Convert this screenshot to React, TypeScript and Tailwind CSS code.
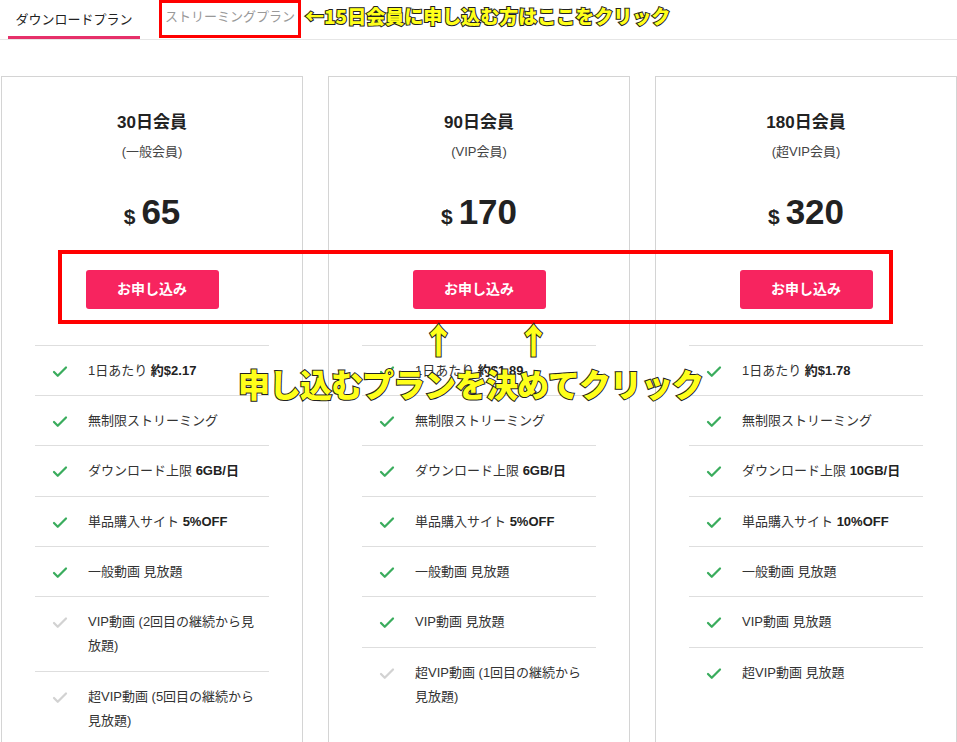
import { Check } from 'lucide-react';

type Feature = { text: string; bold?: string; on: boolean };
type Plan = { title: string; sub: string; price: string; features: Feature[] };

const plans: Plan[] = [
  {
    title: '30日会員',
    sub: '(一般会員)',
    price: '65',
    features: [
      { text: '1日あたり ', bold: '約$2.17', on: true },
      { text: '無制限ストリーミング', on: true },
      { text: 'ダウンロード上限 ', bold: '6GB/日', on: true },
      { text: '単品購入サイト ', bold: '5%OFF', on: true },
      { text: '一般動画 見放題', on: true },
      { text: 'VIP動画 (2回目の継続から見放題)', on: false },
      { text: '超VIP動画 (5回目の継続から見放題)', on: false },
    ],
  },
  {
    title: '90日会員',
    sub: '(VIP会員)',
    price: '170',
    features: [
      { text: '1日あたり ', bold: '約$1.89', on: true },
      { text: '無制限ストリーミング', on: true },
      { text: 'ダウンロード上限 ', bold: '6GB/日', on: true },
      { text: '単品購入サイト ', bold: '5%OFF', on: true },
      { text: '一般動画 見放題', on: true },
      { text: 'VIP動画 見放題', on: true },
      { text: '超VIP動画 (1回目の継続から見放題)', on: false },
    ],
  },
  {
    title: '180日会員',
    sub: '(超VIP会員)',
    price: '320',
    features: [
      { text: '1日あたり ', bold: '約$1.78', on: true },
      { text: '無制限ストリーミング', on: true },
      { text: 'ダウンロード上限 ', bold: '10GB/日', on: true },
      { text: '単品購入サイト ', bold: '10%OFF', on: true },
      { text: '一般動画 見放題', on: true },
      { text: 'VIP動画 見放題', on: true },
      { text: '超VIP動画 見放題', on: true },
    ],
  },
];

const font = "font-['Liberation_Sans','Noto_Sans_CJK_JP',sans-serif]";
const callout =
  "font-['Noto_Sans_CJK_JP',sans-serif] font-black text-[#ffff1a] [-webkit-text-stroke:2px_#222] [paint-order:stroke_fill] leading-none";

function PlanCard({ plan }: { plan: Plan }) {
  return (
    <div className="w-[302px] shrink-0 border border-[#d4d4d4] pt-[36px] pb-4">
      <div className="text-center">
        <h3 className="text-[17px] font-bold text-[#222] leading-[20px]">{plan.title}</h3>
        <p className="mt-[10px] text-[13px] text-[#444] leading-[18px]">{plan.sub}</p>
        <div className="mt-[31px] flex items-baseline justify-center gap-[6px] text-[#222] font-bold">
          <span className="text-[21px]">$</span>
          <span className="text-[35px] leading-[40px]">{plan.price}</span>
        </div>
      </div>
      <div className="mt-[37px] flex justify-center">
        <button className="w-[133px] h-[39px] rounded-[3px] bg-[#f7245f] text-white text-[14px] font-bold">
          お申し込み
        </button>
      </div>
      <ul className="mt-[36px] mx-[33px]">
        {plan.features.map((f, i) => (
          <li key={i} className="flex border-t border-[#dedede] pt-[13px] pb-[12.35px] pl-[16px] pr-2">
            <span className="w-[37px] shrink-0 pt-[4px]">
              <Check
                size={18}
                strokeWidth={3}
                className={f.on ? 'text-[#3aac5d]' : 'text-[#d2d2d2]'}
              />
            </span>
            <span className="text-[13px] leading-[24px] text-[#333]">
              {f.text}
              {f.bold && <b className="font-bold text-[#222]">{f.bold}</b>}
            </span>
          </li>
        ))}
      </ul>
    </div>
  );
}

export default function App() {
  return (
    <div className={`relative w-[957px] h-[742px] overflow-hidden bg-white ${font}`}>
      {/* Tabs */}
      <div className="flex h-[40px] border-b border-[#e6e6e6] text-[13px]">
        <div className="ml-[8px] w-[132px] flex items-center justify-center border-b-[3px] border-[#e6306a] pt-[3px] text-[#222]">
          ダウンロードプラン
        </div>
        <div className="ml-[25px] flex items-start pt-[7px] text-[#999]">ストリーミングプラン</div>
      </div>

      {/* Cards */}
      <div className="mt-[36px] pl-[1px] flex gap-[25px]">
        {plans.map((p) => (
          <PlanCard key={p.title} plan={p} />
        ))}
      </div>

      {/* Annotations */}
      <div className="absolute left-[159px] top-0 w-[142px] h-[38px] border-[3px] border-[#ff0000]" />
      <div className={`absolute left-[305px] top-[6px] text-[19px] ${callout}`}>
        ←15日会員に申し込む方はここをクリック
      </div>
      <div className="absolute left-[58px] top-[250px] w-[835px] h-[74px] border-[4px] border-[#ff0000]" />
      <div className={`absolute left-[421px] top-[321px] text-[35px] ${callout}`}>↑</div>
      <div className={`absolute left-[516px] top-[321px] text-[35px] ${callout}`}>↑</div>
      <div className={`absolute left-[238px] top-[367px] text-[32px] tracking-[-1px] ${callout}`}>
        申し込むプランを決めてクリック
      </div>
    </div>
  );
}
